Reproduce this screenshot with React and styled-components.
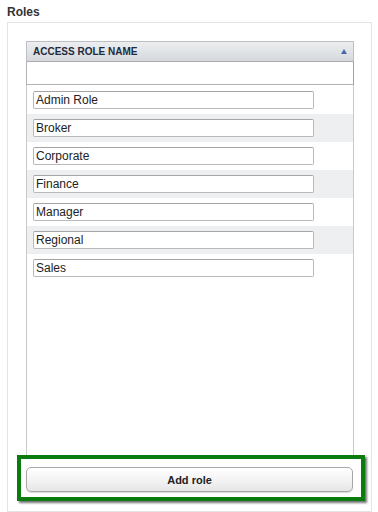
import React from "react";
import styled, { createGlobalStyle } from "styled-components";

const Global = createGlobalStyle`
  html, body { margin: 0; padding: 0; background: #fff; }
  body { font-family: "Liberation Sans", Arial, sans-serif; }
  * { box-sizing: border-box; }
`;

const Page = styled.div`
  width: 378px;
  height: 512px;
  padding: 5px 6px 0 7px;
  display: flex;
  flex-direction: column;
`;

const Title = styled.div`
  font-size: 12px;
  line-height: 14px;
  font-weight: bold;
  color: #333;
  margin-bottom: 3px;
`;

const Panel = styled.div`
  flex: 1;
  border: 1px solid #e4e4e4;
  padding: 18px 18px 10px 18px;
  display: flex;
  flex-direction: column;
`;

const Grid = styled.div`
  flex: 1;
  display: flex;
  flex-direction: column;
  border-left: 1px solid #c9c9c9;
  border-right: 1px solid #c9c9c9;
  margin-right: -1px;
`;

const Header = styled.div`
  height: 21px;
  margin: 0 -1px;
  border: 1px solid #bdbfc2;
  border-bottom-color: #a9abae;
  background: linear-gradient(#eceef0, #d6d9dc);
  display: flex;
  align-items: center;
  justify-content: space-between;
  padding: 0 5px 0 6px;
  font-size: 10px;
  font-weight: bold;
  color: #1f2a3d;
`;

const SortArrow = styled.span`
  width: 0;
  height: 0;
  border-left: 3px solid transparent;
  border-right: 3px solid transparent;
  border-bottom: 5px solid #4a68a6;
  margin-right: 1px;
`;

const FilterRow = styled.div`
  height: 24px;
  margin: 0 -1px;
  padding-bottom: 1px;
`;

const FilterInput = styled.div`
  height: 23px;
  border: 1px solid #b3b3b3;
  border-top: none;
  border-right-color: #a0a0a0;
  background: #fff;
`;

const Row = styled.div`
  height: 28px;
  padding: 5px 0 0 6px;
  background: ${(p) => (p.$alt ? "#eeeff1" : "#fff")};
`;

const RoleInput = styled.div`
  width: 281px;
  height: 18px;
  border: 1px solid #b9b9b9;
  border-top-color: #a4a4a4;
  border-radius: 2px;
  background: #fff;
  font-size: 12px;
  line-height: 16px;
  color: #222;
  padding-left: 2px;
`;

const Footer = styled.div`
  margin: 0 -12px 0 -9px;
  height: 46px;
  border: 4px solid #0b7b0f;
  box-shadow: 2px 2px 2px rgba(0, 0, 0, 0.55);
  background: #fff;
  padding: 8px 8px 5px 5px;
  position: relative;
`;

const Button = styled.div`
  height: 25px;
  border: 1px solid #a8a8a8;
  border-radius: 5px;
  background: linear-gradient(#ffffff, #f4f4f4 50%, #e6e6e6);
  box-shadow: 0 1px 1px rgba(0, 0, 0, 0.15);
  display: flex;
  align-items: center;
  justify-content: center;
  font-size: 11px;
  font-weight: bold;
  color: #222;
`;

const roles = ["Admin Role", "Broker", "Corporate", "Finance", "Manager", "Regional", "Sales"];

export default function App() {
  return (
    <Page>
      <Global />
      <Title>Roles</Title>
      <Panel>
        <Grid>
          <Header>
            <span>ACCESS ROLE NAME</span>
            <SortArrow />
          </Header>
          <FilterRow>
            <FilterInput />
          </FilterRow>
          {roles.map((r, i) => (
            <Row key={r} $alt={i % 2 === 1}>
              <RoleInput>{r}</RoleInput>
            </Row>
          ))}
        </Grid>
        <Footer>
          <Button>Add role</Button>
        </Footer>
      </Panel>
    </Page>
  );
}
